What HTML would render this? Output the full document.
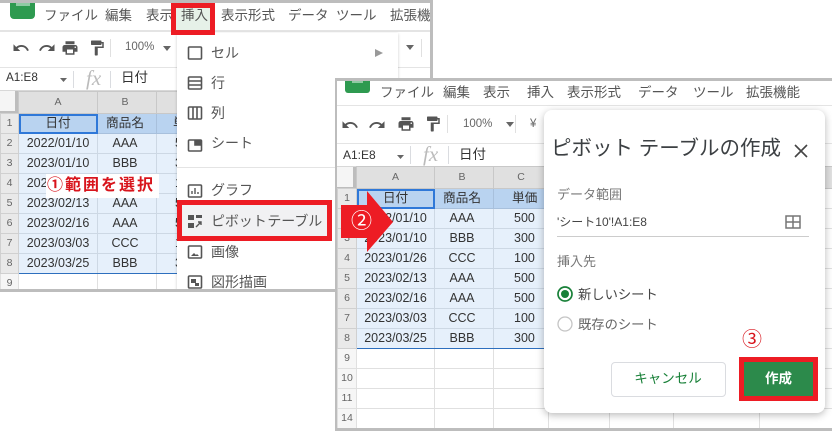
<!DOCTYPE html>
<html lang="ja"><head><meta charset="utf-8"><style>
html,body{margin:0;padding:0;background:#fff}
body{width:832px;height:431px;overflow:hidden;position:relative;font-family:"Liberation Sans","Noto Sans CJK JP",sans-serif;color:#444}
.a{position:absolute}
.t{position:absolute;white-space:nowrap;line-height:20px;height:20px}
.m{font-size:13.5px;color:#555;transform:translateY(-10px)}
.win{position:absolute;background:#fff;overflow:hidden;box-sizing:border-box}
table{position:absolute;border-collapse:collapse;table-layout:fixed;font-size:12.5px;color:#333}
td{padding:0;height:19px;text-align:center;border:1px solid #e0e0e0;overflow:hidden;white-space:nowrap;line-height:19px}
td.h{background:#e9e9e9;color:#666;font-size:10.5px;border-color:#d0d0d0}
td.g{background:#f6f6f6;color:#666;font-size:10.5px;border-color:#e0e0e0}
td.c{background:#e0e0e0;color:#666;font-size:10.5px;border-color:#c8c8c8}
td.s{background:#e6f0fb;border-color:#cdd8e4}
td.r{background:#b9d3f0;border-color:#a8c0dc;font-size:12.7px}
td.b{padding-right:4px}
td.l{text-align:left;padding-left:18px}
td.q{text-align:left;padding-left:20px}
td.e{border-bottom:1px solid #2d6fbe}
.hl{position:absolute;background:#dadce0;height:1px}
.v{position:absolute;background:#dadce0;width:1px}
.red{position:absolute;border:5px solid #ed1c24;box-sizing:border-box}
svg{position:absolute}
</style></head><body>

<!-- LEFT WINDOW -->
<div class="win" style="left:0;top:0;width:433px;height:292px;border-top:3px solid #bdbdbd;border-right:3px solid #bdbdbd;border-bottom:3px solid #bdbdbd">
 <div class="a" style="left:10px;top:-3px;width:25px;height:19px;background:#2e9a50;border-radius:0 0 4px 4px"></div>
 <div class="a" style="left:16px;top:0;width:14px;height:3px;background:#8fcaa3"></div>
 <div class="hl" style="left:0;top:27px;width:430px;height:2px;background:#e4e4e4"></div>
 <div class="hl" style="left:0;top:64px;width:430px;background:#e4e4e4"></div>
 <div class="hl" style="left:0;top:87px;width:430px;background:#d8d8d8"></div>
 <span class="t m" style="left:44px;top:13px">ファイル</span>
 <span class="t m" style="left:105px;top:13px">編集</span>
 <span class="t m" style="left:146px;top:13px">表示</span>
 <span class="t m" style="left:221px;top:13px">表示形式</span>
 <span class="t m" style="left:288px;top:13px">データ</span>
 <span class="t m" style="left:336px;top:13px">ツール</span>
 <span class="t m" style="left:390px;top:13px">拡張機能</span>

 <svg style="left:12px;top:36px" width="18" height="18" viewBox="0 0 24 24" fill="#555"><path d="M12.5 8c-2.65 0-5.05.99-6.9 2.6L2 7v9h9l-3.62-3.62c1.39-1.16 3.16-1.88 5.12-1.88 3.54 0 6.55 2.31 7.6 5.5l2.37-.78C21.08 11.03 17.15 8 12.5 8z"/></svg>
 <svg style="left:38px;top:36px" width="18" height="18" viewBox="0 0 24 24" fill="#555"><path d="M18.4 10.6C16.55 8.99 14.15 8 11.5 8c-4.65 0-8.58 3.03-9.96 7.22L3.9 16c1.05-3.19 4.05-5.5 7.6-5.5 1.95 0 3.73.72 5.12 1.88L13 16h9V7l-3.6 3.6z"/></svg>
 <svg style="left:61px;top:36px" width="18" height="18" viewBox="0 0 24 24" fill="#555"><path d="M19 8H5c-1.66 0-3 1.34-3 3v6h4v4h12v-4h4v-6c0-1.66-1.34-3-3-3zm-3 11H8v-5h8v5zm3-7c-.55 0-1-.45-1-1s.45-1 1-1 1 .45 1 1-.45 1-1 1zm-1-9H6v4h12V3z"/></svg>
 <svg style="left:88px;top:36px" width="18" height="18" viewBox="0 0 24 24" fill="#555"><path d="M18 4V3c0-.55-.45-1-1-1H5c-.55 0-1 .45-1 1v4c0 .55.45 1 1 1h12c.55 0 1-.45 1-1V6h1v4H9v11c0 .55.45 1 1 1h2c.55 0 1-.45 1-1v-9h8V4h-3z"/></svg>
 <div class="v" style="left:110px;top:36px;height:18px;background:#e0e0e0"></div>
 <span class="t" style="left:125px;top:34px;font-size:11.5px;color:#666">100%</span>
 <svg style="left:163px;top:43px" width="8" height="5"><path d="M0 0h8L4 5z" fill="#666"/></svg>
 <svg style="left:406px;top:42px" width="8" height="5"><path d="M0 0h8L4 5z" fill="#666"/></svg>
 <div class="v" style="left:421px;top:36px;height:18px;background:#e0e0e0"></div>

 <span class="t" style="left:6px;top:65px;font-size:11.7px;color:#333">A1:E8</span>
 <svg style="left:60px;top:75px" width="7" height="4"><path d="M0 0h7L3.5 4z" fill="#666"/></svg>
 <div class="v" style="left:73px;top:68px;height:17px"></div>
 <span class="t" style="left:86px;top:65px;font:italic 21px/20px 'Liberation Serif',serif;color:#bbb">fx</span>
 <div class="v" style="left:110px;top:68px;height:17px"></div>
 <span class="t" style="left:121px;top:65px;font-size:13.5px;color:#333">日付</span>

 <div class="a" style="left:0;top:88px;width:15px;height:20px;background:#f5f5f5;border-right:3px solid #bdbdbd;border-bottom:2px solid #bdbdbd"></div>
 <table style="left:0;top:88px;width:280px">
  <colgroup><col style="width:18px"><col style="width:79px"><col style="width:59px"><col style="width:124px"></colgroup>
  <tr><td style="height:21px;background:transparent;border:0"></td><td class="c" style="height:21px">A</td><td class="c b" style="height:21px">B</td><td class="c" style="height:21px">C</td></tr>
  <tr><td class="h">1</td><td class="r" style="outline:2px solid #2f78d8;outline-offset:-2px">日付</td><td class="r b">商品名</td><td class="r" style="text-align:left;padding-left:16px">単価</td></tr>
  <tr><td class="h">2</td><td class="s">2022/01/10</td><td class="s b">AAA</td><td class="s l">500</td></tr>
  <tr><td class="h">3</td><td class="s">2023/01/10</td><td class="s b">BBB</td><td class="s l">300</td></tr>
  <tr><td class="h">4</td><td class="s">2023/01/26</td><td class="s b">CCC</td><td class="s l">100</td></tr>
  <tr><td class="h">5</td><td class="s">2023/02/13</td><td class="s b">AAA</td><td class="s l">500</td></tr>
  <tr><td class="h">6</td><td class="s">2023/02/16</td><td class="s b">AAA</td><td class="s l">500</td></tr>
  <tr><td class="h">7</td><td class="s">2023/03/03</td><td class="s b">CCC</td><td class="s l">100</td></tr>
  <tr><td class="h">8</td><td class="s e">2023/03/25</td><td class="s b e">BBB</td><td class="s l e">300</td></tr>
  <tr><td class="g">9</td><td></td><td></td><td></td></tr>
 </table>
 <div class="a" style="left:46px;top:171px;width:113px;height:24px;background:#fff"></div>
 <span class="t" style="left:47px;top:172px;font-size:16px;font-weight:700;color:#d8141c;letter-spacing:2px;line-height:22px;height:22px">①範囲を選択</span>

 <!-- dropdown -->
 <div class="a" style="left:177px;top:30px;width:221px;height:262px;background:#fff;box-shadow:0 1px 3px rgba(0,0,0,.2)"></div>
 <div class="a" style="left:178px;top:200px;width:150px;height:35px;background:#f1f1f3"></div>
 <span class="t m" style="left:211px;top:50px;font-size:14px">セル</span>
 <svg style="left:375px;top:46px" width="8" height="8"><path d="M0 0l8 4-8 4z" fill="#999"/></svg>
 <span class="t m" style="left:211px;top:80px;font-size:14px">行</span>
 <span class="t m" style="left:211px;top:110px;font-size:14px">列</span>
 <span class="t m" style="left:211px;top:140px;font-size:14px">シート</span>
 <div class="hl" style="left:177px;top:164px;width:221px;background:#e4e4e4"></div>
 <span class="t m" style="left:211px;top:187px;font-size:14px">グラフ</span>
 <span class="t m" style="left:211px;top:218px;font-size:14px;word-spacing:-3px;letter-spacing:-.1px">ピボット テーブル</span>
 <span class="t m" style="left:211px;top:249px;font-size:14px">画像</span>
 <span class="t m" style="left:211px;top:279px;font-size:14px">図形描画</span>

 <svg style="left:187px;top:42px" width="16" height="248" fill="none" stroke="#555" stroke-width="1.6">
  <rect x="1.5" y="2" width="13" height="12" rx="1"/>
  <rect x="1.5" y="32" width="13" height="12" rx="1"/><path d="M2 36h12M2 40h12"/>
  <rect x="1.5" y="62" width="13" height="12" rx="1"/><path d="M6 62v12M10 62v12"/>
  <rect x="1.5" y="95" width="13" height="11" rx="1"/><path d="M8 96h6v4H8z" fill="#555"/>
  <rect x="1.5" y="140" width="13" height="12" rx="1"/><path d="M5 149v-3M8 149v-6M11 149v-2" stroke-width="1.4"/>
  <path d="M1 170h6v5H1zM1 178h6v5H1zM9 170h6v3H9z" fill="#555" stroke="none"/><path d="M9 182l5-5M11 177h3v3" stroke-width="1.4"/>
  <rect x="1.5" y="201" width="13" height="12" rx="1"/><path d="M4 211l3-3 2 2 1-1 2 2z" fill="#555" stroke="none"/>
  <rect x="1.5" y="231" width="13" height="12" rx="1"/><path d="M4 234h5v4H4zM8 238h4v3H8z" fill="#555" stroke="none"/>
 </svg>
</div>

<!-- 挿入 highlight -->
<div class="a" style="left:175px;top:7px;width:36px;height:24px;background:#e6f1e8"></div>
<span class="t m" style="left:181px;top:16px">挿入</span>
<div class="red" style="left:171px;top:3px;width:44px;height:32px"></div>
<div class="red" style="left:177px;top:200px;width:155px;height:41px"></div>

<!-- RIGHT WINDOW -->
<div class="win" style="left:335px;top:78px;width:497px;height:353px;border-top:3px solid #bdbdbd;border-left:2px solid #bdbdbd;border-bottom:3px solid #bdbdbd">
 <div class="a" style="left:8px;top:-1px;width:25px;height:13px;background:#2e9a50;border-radius:0 0 3px 3px"></div>
 <div class="a" style="left:15px;top:0;width:11px;height:2px;background:#8fcaa3"></div>
 <div class="hl" style="left:0;top:24px;width:497px;background:#e4e4e4"></div>
 <div class="hl" style="left:0;top:62px;width:497px;background:#e4e4e4"></div>
 <div class="hl" style="left:0;top:85px;width:497px;background:#d8d8d8"></div>
 <span class="t m" style="left:43px;top:12px">ファイル</span>
 <span class="t m" style="left:106px;top:12px">編集</span>
 <span class="t m" style="left:146px;top:12px">表示</span>
 <span class="t m" style="left:190px;top:12px">挿入</span>
 <span class="t m" style="left:230px;top:12px">表示形式</span>
 <span class="t m" style="left:301px;top:12px">データ</span>
 <span class="t m" style="left:356px;top:12px">ツール</span>
 <span class="t m" style="left:409px;top:12px">拡張機能</span>

 <svg style="left:4px;top:35px" width="18" height="18" viewBox="0 0 24 24" fill="#555"><path d="M12.5 8c-2.65 0-5.05.99-6.9 2.6L2 7v9h9l-3.62-3.62c1.39-1.16 3.16-1.88 5.12-1.88 3.54 0 6.55 2.31 7.6 5.5l2.37-.78C21.08 11.03 17.15 8 12.5 8z"/></svg>
 <svg style="left:31px;top:35px" width="18" height="18" viewBox="0 0 24 24" fill="#555"><path d="M18.4 10.6C16.55 8.99 14.15 8 11.5 8c-4.65 0-8.58 3.03-9.96 7.22L3.9 16c1.05-3.19 4.05-5.5 7.6-5.5 1.95 0 3.73.72 5.12 1.88L13 16h9V7l-3.6 3.6z"/></svg>
 <svg style="left:60px;top:34px" width="18" height="18" viewBox="0 0 24 24" fill="#555"><path d="M19 8H5c-1.66 0-3 1.34-3 3v6h4v4h12v-4h4v-6c0-1.66-1.34-3-3-3zm-3 11H8v-5h8v5zm3-7c-.55 0-1-.45-1-1s.45-1 1-1 1 .45 1 1-.45 1-1 1zm-1-9H6v4h12V3z"/></svg>
 <svg style="left:87px;top:34px" width="18" height="18" viewBox="0 0 24 24" fill="#555"><path d="M18 4V3c0-.55-.45-1-1-1H5c-.55 0-1 .45-1 1v4c0 .55.45 1 1 1h12c.55 0 1-.45 1-1V6h1v4H9v11c0 .55.45 1 1 1h2c.55 0 1-.45 1-1v-9h8V4h-3z"/></svg>
 <div class="v" style="left:110px;top:34px;height:18px;background:#e0e0e0"></div>
 <span class="t" style="left:126px;top:33px;font-size:11.5px;color:#666">100%</span>
 <svg style="left:169px;top:41px" width="8" height="5"><path d="M0 0h8L4 5z" fill="#666"/></svg>
 <div class="v" style="left:178px;top:34px;height:18px;background:#e0e0e0"></div>
 <span class="t" style="left:193px;top:33px;font-size:11.5px;color:#666">¥</span>

 <span class="t" style="left:6px;top:64px;font-size:12px;color:#333">A1:E8</span>
 <svg style="left:60px;top:74px" width="7" height="4"><path d="M0 0h7L3.5 4z" fill="#666"/></svg>
 <div class="v" style="left:73px;top:65px;height:18px"></div>
 <span class="t" style="left:86px;top:63px;font:italic 21px/20px 'Liberation Serif',serif;color:#bbb">fx</span>
 <div class="v" style="left:111px;top:65px;height:18px"></div>
 <span class="t" style="left:122px;top:64px;font-size:13.5px;color:#333">日付</span>

 <div class="a" style="left:0;top:86px;width:16px;height:20px;background:#f5f5f5;border-right:3px solid #bdbdbd;border-bottom:2px solid #bdbdbd"></div>
 <table style="left:0;top:85px;width:495px">
  <colgroup><col style="width:19px"><col style="width:78px"><col style="width:59px"><col style="width:55px"><col style="width:61px"><col style="width:64px"><col style="width:86px"><col style="width:73px"></colgroup>
  <tr><td style="height:21px;background:transparent;border:0"></td><td class="c" style="height:21px">A</td><td class="c b" style="height:21px">B</td><td class="c" style="height:21px">C</td><td class="c" style="height:21px"></td><td class="c" style="height:21px"></td><td class="c" style="height:21px"></td><td class="c" style="height:21px"></td></tr>
  <tr><td class="h">1</td><td class="r" style="outline:2px solid #2f78d8;outline-offset:-2px">日付</td><td class="r b">商品名</td><td class="r" style="text-align:left;padding-left:18px">単価</td><td></td><td></td><td></td><td></td></tr>
  <tr><td class="h">2</td><td class="s">2022/01/10</td><td class="s b">AAA</td><td class="s q">500</td><td></td><td></td><td></td><td></td></tr>
  <tr><td class="h">3</td><td class="s">2023/01/10</td><td class="s b">BBB</td><td class="s q">300</td><td></td><td></td><td></td><td></td></tr>
  <tr><td class="h">4</td><td class="s">2023/01/26</td><td class="s b">CCC</td><td class="s q">100</td><td></td><td></td><td></td><td></td></tr>
  <tr><td class="h">5</td><td class="s">2023/02/13</td><td class="s b">AAA</td><td class="s q">500</td><td></td><td></td><td></td><td></td></tr>
  <tr><td class="h">6</td><td class="s">2023/02/16</td><td class="s b">AAA</td><td class="s q">500</td><td></td><td></td><td></td><td></td></tr>
  <tr><td class="h">7</td><td class="s">2023/03/03</td><td class="s b">CCC</td><td class="s q">100</td><td></td><td></td><td></td><td></td></tr>
  <tr><td class="h">8</td><td class="s e">2023/03/25</td><td class="s b e">BBB</td><td class="s q e">300</td><td></td><td></td><td></td><td></td></tr>
  <tr><td class="g">9</td><td></td><td></td><td></td><td></td><td></td><td></td><td></td></tr>
  <tr><td class="g">10</td><td></td><td></td><td></td><td></td><td></td><td></td><td></td></tr>
  <tr><td class="g">11</td><td></td><td></td><td></td><td></td><td></td><td></td><td></td></tr>
  <tr><td class="g">14</td><td></td><td></td><td></td><td></td><td></td><td></td><td></td></tr>
 </table>

 <!-- dialog -->
 <div class="a" style="left:207px;top:29px;width:281px;height:303px;background:#fff;border-radius:8px;box-shadow:0 2px 8px rgba(0,0,0,.28)"></div>
 <span class="t" style="left:214px;top:55px;font-size:20.5px;color:#3c4043;line-height:26px;height:26px">ピボット テーブルの作成</span>
 <svg style="left:456px;top:62px" width="16" height="16" fill="none" stroke="#444" stroke-width="1.6"><path d="M2 2l12 12M14 2L2 14"/></svg>
 <span class="t" style="left:220px;top:104px;font-size:13px;color:#777">データ範囲</span>
 <span class="t" style="left:220px;top:131px;font-size:12px;color:#444">'シート10'!A1:E8</span>
 <svg style="left:448px;top:134px" width="16" height="14" fill="none" stroke="#777" stroke-width="1.5"><path d="M1 1h14v12H1zM8 1v12M1 7h14"/></svg>
 <div class="hl" style="left:220px;top:155px;width:252px;background:#ccc"></div>
 <span class="t" style="left:220px;top:171px;font-size:13px;color:#777">挿入先</span>
 <svg style="left:220px;top:205px" width="16" height="16"><circle cx="8" cy="8" r="7" fill="none" stroke="#188038" stroke-width="1.7"/><circle cx="8" cy="8" r="4" fill="#188038"/></svg>
 <span class="t" style="left:241px;top:204px;font-size:13.3px;color:#444">新しいシート</span>
 <svg style="left:220px;top:235px" width="16" height="16"><circle cx="8" cy="8" r="7" fill="none" stroke="#c4c4c4" stroke-width="1.3"/></svg>
 <span class="t" style="left:241px;top:234px;font-size:13.3px;color:#666">既存のシート</span>
 <div class="a" style="left:274px;top:281px;width:113px;height:33px;border:1px solid #dadce0;border-radius:4px;background:#fff"></div>
 <span class="t" style="left:273px;top:288px;width:116px;text-align:center;font-size:13.5px;color:#188038">キャンセル</span>
 <div class="a" style="left:405px;top:279px;width:73px;height:38px;background:#2c8a4b"></div>
 <span class="t" style="left:405px;top:288px;width:73px;text-align:center;font-size:13.5px;font-weight:700;color:#fff">作成</span>
</div>

<div class="red" style="left:739px;top:357px;width:79px;height:44px"></div>
<span class="t" style="left:742px;top:328px;font-size:20px;color:#d8141c;line-height:24px;height:24px">③</span>

<!-- arrow -->
<svg style="left:341px;top:191px" width="53" height="62"><path d="M0 14H26V0L52 31 26 61V47H0z" fill="#ed1c24"/></svg>
<span class="t" style="left:351px;top:211px;font-size:21px;color:#fff;line-height:22px;height:22px">②</span>
</body></html>
